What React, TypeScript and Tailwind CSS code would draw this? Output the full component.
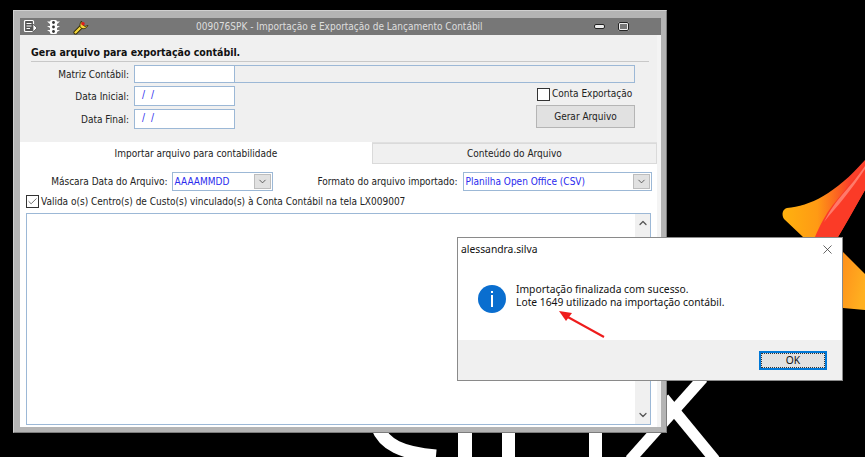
import React from 'react';
import { ChevronDown, ChevronUp, X, Check } from 'lucide-react';

const Backdrop = () => (
  <svg className="absolute inset-0" width="865" height="457" viewBox="0 0 865 457">
    <defs>
      <linearGradient id="flame" gradientUnits="userSpaceOnUse" x1="785" y1="215" x2="850" y2="215">
        <stop offset="0" stopColor="#ffb00f" />
        <stop offset="0.5" stopColor="#ff9a14" />
        <stop offset="1" stopColor="#f9402a" />
      </linearGradient>
      <linearGradient id="tail" x1="0" y1="0" x2="1" y2="0.6">
        <stop offset="0" stopColor="#ff8f1a" />
        <stop offset="1" stopColor="#ffb020" />
      </linearGradient>
    </defs>
    <path d="M787 208 C810 206 835 194 865 160 L865 190 L838 237 L803 237 L784 219 C781 214 783 209 787 208 Z" fill="url(#flame)" />
    <path d="M815 237 C820 225 826 214 832 206 C842 194 855 178 865 163 L865 190 C856 206 846 224 838 237 Z" fill="#fb3b27" />
    <path d="M824 222 C830 210 836 202 842 195 C850 186 858 176 865 166 L865 169 C858 180 850 190 844 198 C838 206 830 214 824 222 Z" fill="#ff7a6a" />
    <path d="M843 252 L865 274 L865 310 L843 308 Z" fill="url(#tail)" />
    {/* wordmark */}
    <path d="M377 426 C384 445 402 453 436 456" fill="none" stroke="#fff" strokeWidth="13" />
    <path d="M458 430H472V457H458ZM502 430H515V457H502ZM589 430H602V457H589Z" fill="#fff" />
    <path d="M703 378 L630 460" fill="none" stroke="#fff" strokeWidth="11" />
    <path d="M664 398 L715 460" fill="none" stroke="#fff" strokeWidth="11" />
  </svg>
);

const TitleIcons = () => (
  <div className="flex items-center">
    <svg className="ml-[3px]" width="15" height="15" viewBox="0 0 15 15">
      <rect x="1.5" y="1.5" width="9" height="11" rx="1" fill="#555" stroke="#fff" strokeWidth="1.2" />
      <path d="M3.5 4.5H8.5M3.5 7H8.5M3.5 9.5H7" stroke="#fff" />
      <path d="M10 5L14 9L10 13Z" fill="#fff" stroke="#333" strokeWidth="0.6" />
    </svg>
    <svg className="ml-[8px]" width="15" height="16" viewBox="0 0 15 16">
      <rect x="4" y="1" width="7" height="14" rx="1.5" fill="#fff" />
      <path d="M1 2.5H14L11 5H4ZM1 7H14L11 9H4ZM1 11H14L11 13H4Z" fill="#fff" />
      <circle cx="7.5" cy="3.5" r="1.4" fill="#333" />
      <circle cx="7.5" cy="8" r="1.4" fill="#333" />
      <circle cx="7.5" cy="12.5" r="1.4" fill="#333" />
    </svg>
    <svg className="ml-[12px]" width="16" height="16" viewBox="0 0 16 16">
      <path d="M2.5 13.5L8 8" stroke="#2e2800" strokeWidth="4" strokeLinecap="round" />
      <path d="M2.5 13.5L8 8" stroke="#f4d63a" strokeWidth="2.4" strokeLinecap="round" />
      <path d="M8.5 2C6.5 4.5 6.5 7.5 8 9C10.5 10.5 13.5 9.5 15 6.5L12 7.5L9.5 5.5Z" fill="#f4d63a" stroke="#2e2800" strokeWidth="0.8" />
      <circle cx="10" cy="4.8" r="1.8" fill="#e01b1b" />
    </svg>
  </div>
);

const Combo = ({ value, w }: { value: string; w: string }) => (
  <div className={`${w} h-[19px] bg-white border border-[#9cb8d6] flex items-center pl-[2px] pr-[1px]`}>
    <span className="flex-1 text-[10px] text-[#2a2aee] leading-none">{value}</span>
    <span className="w-[17px] h-[15px] bg-[#e1e1e1] border border-[#bdbdbd] flex items-center justify-center">
      <ChevronDown size={11} color="#444" strokeWidth={1.8} />
    </span>
  </div>
);

const DateRow = ({ label, mt }: { label: string; mt: string }) => (
  <div className={`flex items-center ${mt}`}>
    <span className="w-[109px] text-right text-[10px] text-[#222] pr-[5px]">{label}</span>
    <div className="w-[101px] h-[20px] bg-white border border-[#9cb8d6] text-[10px] text-[#2a2aee] pl-[7px] leading-[16px] tracking-[1.5px]">/ /</div>
  </div>
);

const ErpWindow = () => (
  <div className="absolute left-[13px] top-[10px] w-[654px] h-[423px] bg-[#b4b4b4] border-r border-b border-[#7d7d7d] border-t border-l border-t-[#d0d0d0] border-l-[#d0d0d0] pl-[6px] pt-[7px] pr-[5px] pb-[5px] flex flex-col font-['DejaVu_Sans_Condensed','DejaVu_Sans',sans-serif]">
    <div className="h-[17px] bg-[#777777] flex items-center relative shrink-0">
      <TitleIcons />
      <span className="absolute left-[176px] text-[10px] text-[#dedede] whitespace-nowrap">009076SPK - Importação e Exportação de Lançamento Contábil</span>
      <div className="ml-auto flex items-center gap-[13px] mr-[32px]">
        <span className="w-[11px] h-[5px] bg-[#eee] border border-[#222] rounded-[2px]" />
        <span className="w-[11px] h-[9px] bg-[#777] border-2 border-[#eee] rounded-[2px] outline outline-[#222] -outline-offset-1" />
      </div>
    </div>
    <div className="flex-1 bg-white flex flex-col min-h-0 border-r-[4px] border-[#f4f4f4]">
      <div className="h-[108px] bg-[#f0f0f0] pl-[11px] pr-[8px] pt-[10px] shrink-0 border-b border-[#e0e0e0]">
        <div className="text-[10.5px] font-bold text-[#111] leading-[15px] border-b border-[#c8c8c8] pb-[1px]">Gera arquivo para exportação contábil.</div>
        <div className="flex mt-[3px]">
          <div className="flex flex-col">
            <div className="flex items-center">
              <span className="w-[103px] text-right text-[10px] text-[#222] pr-[5px]">Matriz Contábil:</span>
              <div className="w-[101px] h-[18px] bg-white border border-[#9cb8d6]" />
              <div className="w-[400px] h-[18px] bg-[#f0f0f0] border border-l-0 border-[#9cb8d6]" />
            </div>
            <div className="flex">
              <div className="-ml-[6px]">
                <DateRow label="Data Inicial:" mt="mt-[3px]" />
                <DateRow label="Data Final:" mt="mt-[3px]" />
              </div>
              <div className="ml-[301px] mt-[4px] flex flex-col">
                <label className="flex items-center">
                  <span className="ml-[1px] w-[13px] h-[13px] bg-white border border-[#333]" />
                  <span className="ml-[2px] text-[10px] text-[#222] leading-[14px] whitespace-nowrap">Conta Exportação</span>
                </label>
                <button className="w-[99px] h-[23px] mt-[4px] bg-[#e1e1e1] border border-[#b5b5b5] text-[10px] text-[#222]">Gerar Arquivo</button>
              </div>
            </div>
          </div>
        </div>
      </div>
      <div className="flex h-[21px] shrink-0 text-[10px] text-[#222]">
        <div className="w-[353px] bg-white flex items-center justify-center -mt-[1px]">Importar arquivo para contabilidade</div>
        <div className="w-[286px] bg-[#f0f0f0] border border-[#dadada] flex items-center justify-center">Conteúdo do Arquivo</div>
      </div>
      <div className="flex-1 flex flex-col pl-[6px] pr-[5px] pb-[2px] min-h-0">
        <div className="flex items-center mt-[8px]">
          <span className="w-[146px] text-right pr-[4px] text-[10px] text-[#222]">Máscara Data do Arquivo:</span>
          <Combo value="AAAAMMDD" w="w-[102px]" />
          <span className="w-[190px] text-right pr-[5px] text-[10px] text-[#222] whitespace-nowrap">Formato do arquivo importado:</span>
          <Combo value="Planilha Open Office (CSV)" w="w-[190px]" />
        </div>
        <div className="flex items-center mt-[3px] h-[15px]">
          <span className="w-[13px] h-[13px] bg-white border border-[#333] flex items-center justify-center">
            <Check size={11} color="#333" strokeWidth={1.5} />
          </span>
          <span className="ml-[2px] text-[10px] text-[#222] whitespace-nowrap">Valida o(s) Centro(s) de Custo(s) vinculado(s) à Conta Contábil na tela LX009007</span>
        </div>
        <div className="flex-1 mt-[4px] mr-[1px] bg-white border border-[#9cb8d6] flex justify-end">
          <div className="w-[15px] bg-[#f0f0f0] flex flex-col items-center justify-between py-[3px]">
            <ChevronUp size={12} color="#555" strokeWidth={2.5} />
            <ChevronDown size={12} color="#555" strokeWidth={2.5} />
          </div>
        </div>
      </div>
    </div>
  </div>
);

const MessageDialog = () => (
  <div className="absolute left-[457px] top-[237px] w-[386px] h-[144px] bg-white border border-[#8a8a8a] flex flex-col font-['Noto_Sans',sans-serif]">
    <div className="flex items-center justify-between h-[23px] pl-[3px] pr-[7px] shrink-0">
      <span className="text-[10.3px] text-[#111]">alessandra.silva</span>
      <X size={15} color="#333" strokeWidth={1.2} />
    </div>
    <div className="flex-1 flex items-start pl-[20px] pt-[22px] relative">
      <div className="w-[28px] h-[28px] rounded-full bg-[#0a6ecf] flex flex-col items-center justify-center shrink-0 mt-[2px]">
        <span className="w-[2px] h-[2px] bg-white mb-[2px]" />
        <span className="w-[2px] h-[12px] bg-white" />
      </div>
      <div className="ml-[10px] text-[10.3px] leading-[13px] text-[#111]">
        <p>Importação finalizada com sucesso.</p>
        <p>Lote 1649 utilizado na importação contábil.</p>
      </div>
      <svg className="absolute left-[98px] top-[47px]" width="52" height="32" viewBox="0 0 52 32">
        <path d="M48 29L10 8" stroke="#ee1c1c" strokeWidth="2" />
        <path d="M3 3L16 5L10 13Z" fill="#ee1c1c" />
      </svg>
    </div>
    <div className="h-[40px] bg-[#f0f0f0] flex items-center justify-end pr-[15px] shrink-0">
      <button className="w-[68px] h-[19px] bg-[#e1e1e1] border-2 border-[#0078d7] outline-1 outline-dotted -outline-offset-3 outline-[#333] text-[10.3px] text-[#111] leading-none">OK</button>
    </div>
  </div>
);

export default function App() {
  return (
    <div className="relative w-[865px] h-[457px] bg-black overflow-hidden">
      <Backdrop />
      <ErpWindow />
      <MessageDialog />
    </div>
  );
}
